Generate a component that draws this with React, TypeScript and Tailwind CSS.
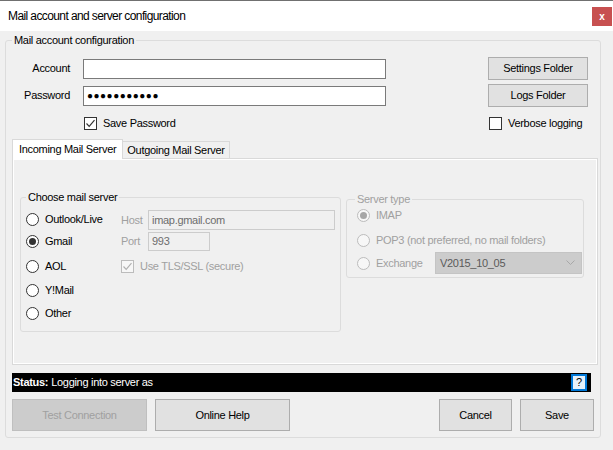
import React from "react";

type RadioProps = { label: string; checked?: boolean; disabled?: boolean };

const Radio: React.FC<RadioProps> = ({ label, checked, disabled }) => {
  return (
    <div className="flex items-center h-[16px]">
      <span
        className={`w-[13px] h-[13px] rounded-full border flex items-center justify-center ${
          disabled ? "border-[#bcbcbc] bg-[#f7f7f7]" : "border-[#333333] bg-white"
        }`}
      >
        {checked && (
          <span className={`w-[7px] h-[7px] rounded-full ${disabled ? "bg-[#a6a6a6]" : "bg-[#333333]"}`} />
        )}
      </span>
      <span className={`ml-[6px] ${disabled ? "text-[#a0a0a0]" : ""}`}>{label}</span>
    </div>
  );
};

type CheckProps = { label: string; checked?: boolean; disabled?: boolean };

const Check: React.FC<CheckProps> = ({ label, checked, disabled }) => {
  return (
    <div className="flex items-center h-[16px]">
      <span
        className={`w-[13px] h-[13px] border flex items-center justify-center ${
          disabled ? "border-[#bcbcbc] bg-[#f7f7f7]" : "border-[#333333] bg-white"
        }`}
      >
        {checked && (
          <svg width="11" height="11" viewBox="0 0 11 11">
            <polyline
              points="1.5,5.5 4.2,8.3 9.5,2.2"
              fill="none"
              stroke={disabled ? "#b0b0b0" : "#333333"}
              strokeWidth="1.2"
            />
          </svg>
        )}
      </span>
      <span className={`ml-[6px] ${disabled ? "text-[#a0a0a0]" : ""}`}>{label}</span>
    </div>
  );
};

type BtnProps = { label: string; className: string; disabled?: boolean };

const Btn: React.FC<BtnProps> = ({ label, className, disabled }) => {
  return (
    <div
      className={`flex items-center justify-center border ${
        disabled ? "bg-[#cccccc] border-[#bfbfbf] text-[#a0a0a0]" : "bg-[#e1e1e1] border-[#adadad]"
      } ${className}`}
    >
      {label}
    </div>
  );
};

export default function App() {
  return (
    <div className="w-[613px] h-[450px] overflow-hidden bg-[#f0f0f0] text-[11px] tracking-[-0.3px] text-black font-['Liberation_Sans',Arial,sans-serif]">
      {/* title bar */}
      <div className="h-[31px] bg-white border-t border-[#707070] flex items-center">
        <span className="ml-[8px] text-[12px] tracking-[-0.6px]">Mail account and server configuration</span>
        <div className="ml-auto mr-[1px] w-[20px] h-[19px] bg-[#c75050] text-white flex items-center justify-center text-[10px] font-bold">
          x
        </div>
      </div>

      <fieldset className="ml-[5px] mt-[3px] w-[596px] border border-[#dcdcdc] rounded-[3px]">
        <legend className="ml-[6px] px-[2px] leading-[13px]">Mail account configuration</legend>

        {/* account */}
        <div className="flex items-center h-[23px] mt-[10px] pr-[12px]">
          <span className="w-[64px] text-right">Account</span>
          <div className="ml-[13px] w-[303px] h-[20px] bg-white border border-[#7a7a7a]" />
          <Btn label="Settings Folder" className="ml-auto w-[100px] h-[23px]" />
        </div>

        {/* password */}
        <div className="flex items-center h-[23px] mt-[4px] pr-[12px]">
          <span className="w-[64px] text-right">Password</span>
          <div className="ml-[13px] w-[303px] h-[20px] bg-white border border-[#7a7a7a] flex items-center pl-[3px] text-[10px] tracking-[0.5px]">
            ●●●●●●●●●●●
          </div>
          <Btn label="Logs Folder" className="ml-auto w-[100px] h-[23px]" />
        </div>

        <div className="flex items-center mt-[8px] pr-[12px]">
          <div className="ml-[78px]">
            <Check label="Save Password" checked />
          </div>
          <div className="ml-auto w-[100px] pl-[1px]">
            <Check label="Verbose logging" />
          </div>
        </div>

        {/* tabs */}
        <div className="ml-[6px] mt-[8px] flex items-end h-[19px]">
          <div className="h-[20px] px-[6px] bg-white border border-b-0 border-[#d9d9d9] flex items-center relative z-10 -mb-px">
            Incoming Mail Server
          </div>
          <div className="h-[17px] px-[4px] bg-[#f0f0f0] border border-l-0 border-b-0 border-[#d9d9d9] flex items-center">
            Outgoing Mail Server
          </div>
        </div>
        <div className="ml-[6px] w-[586px] h-[207px] border border-[#d9d9d9] shadow-[inset_1px_1px_0_#ffffff,inset_-1px_-1px_0_#ffffff] flex items-start">
          <fieldset className="ml-[7px] mt-[32px] w-[321px] border border-[#dcdcdc] rounded-[3px] pb-[10px]">
            <legend className="ml-[5px] px-[2px] leading-[13px]">Choose mail server</legend>
            <div className="flex">
              <div className="pl-[5px] w-[100px] flex flex-col">
                <div className="mt-[7px]"><Radio label="Outlook/Live" /></div>
                <div className="mt-[6px]"><Radio label="Gmail" checked /></div>
                <div className="mt-[9px]"><Radio label="AOL" /></div>
                <div className="mt-[8px]"><Radio label="Y!Mail" /></div>
                <div className="mt-[7px]"><Radio label="Other" /></div>
              </div>
              <div className="flex flex-col">
                <div className="flex items-center mt-[6px] h-[20px]">
                  <span className="w-[27px] text-[#a0a0a0]">Host</span>
                  <div className="w-[187px] h-[20px] border border-[#cccccc] bg-[#f0f0f0] text-[#6d6d6d] flex items-center pl-[3px]">
                    imap.gmail.com
                  </div>
                </div>
                <div className="flex items-center mt-[2px] h-[19px]">
                  <span className="w-[27px] text-[#a0a0a0]">Port</span>
                  <div className="w-[62px] h-[19px] border border-[#cccccc] bg-[#f0f0f0] text-[#6d6d6d] flex items-center pl-[3px]">
                    993
                  </div>
                </div>
                <div className="mt-[7px]">
                  <Check label="Use TLS/SSL (secure)" checked disabled />
                </div>
              </div>
            </div>
          </fieldset>

          <fieldset className="ml-[5px] mt-[34px] w-[238px] border border-[#dcdcdc] rounded-[3px] pb-[3px] pl-[10px] pr-[1px]">
            <legend className="ml-[-2px] px-[2px] leading-[13px] text-[#a0a0a0]">Server type</legend>
            <div className="mt-[1px]"><Radio label="IMAP" checked disabled /></div>
            <div className="mt-[9px]"><Radio label="POP3 (not preferred, no mail folders)" disabled /></div>
            <div className="mt-[4px] flex items-center h-[22px]">
              <Radio label="Exchange" disabled />
              <div className="ml-auto w-[147px] h-[22px] bg-[#cccccc] border border-[#c4c4c4] flex items-center pl-[4px] text-[#5a5a5a]">
                V2015_10_05
                <svg className="ml-auto mr-[6px]" width="9" height="6" viewBox="0 0 9 6">
                  <polyline points="0.5,0.5 4.5,4.5 8.5,0.5" fill="none" stroke="#a8a8a8" strokeWidth="1" />
                </svg>
              </div>
            </div>
          </fieldset>
        </div>

        {/* status */}
        <div className="ml-[6px] mt-[8px] w-[579px] h-[19px] bg-black text-white flex items-center pl-[1px]">
          <span className="font-bold">Status:</span>
          <span className="ml-[3px]">Logging into server as</span>
          <div className="ml-auto mr-[4px] w-[16px] h-[17px] bg-[#e5f1fb] border-2 border-[#0078d7] text-black flex items-center justify-center">
            ?
          </div>
        </div>

        {/* buttons */}
        <div className="flex mt-[7px] mb-[6px] pl-[6px] pr-[6px]">
          <Btn label="Test Connection" className="w-[135px] h-[32px]" disabled />
          <Btn label="Online Help" className="ml-[8px] w-[135px] h-[32px]" />
          <Btn label="Cancel" className="ml-auto w-[73px] h-[32px]" />
          <Btn label="Save" className="ml-[8px] w-[74px] h-[32px]" />
        </div>
      </fieldset>
    </div>
  );
}
